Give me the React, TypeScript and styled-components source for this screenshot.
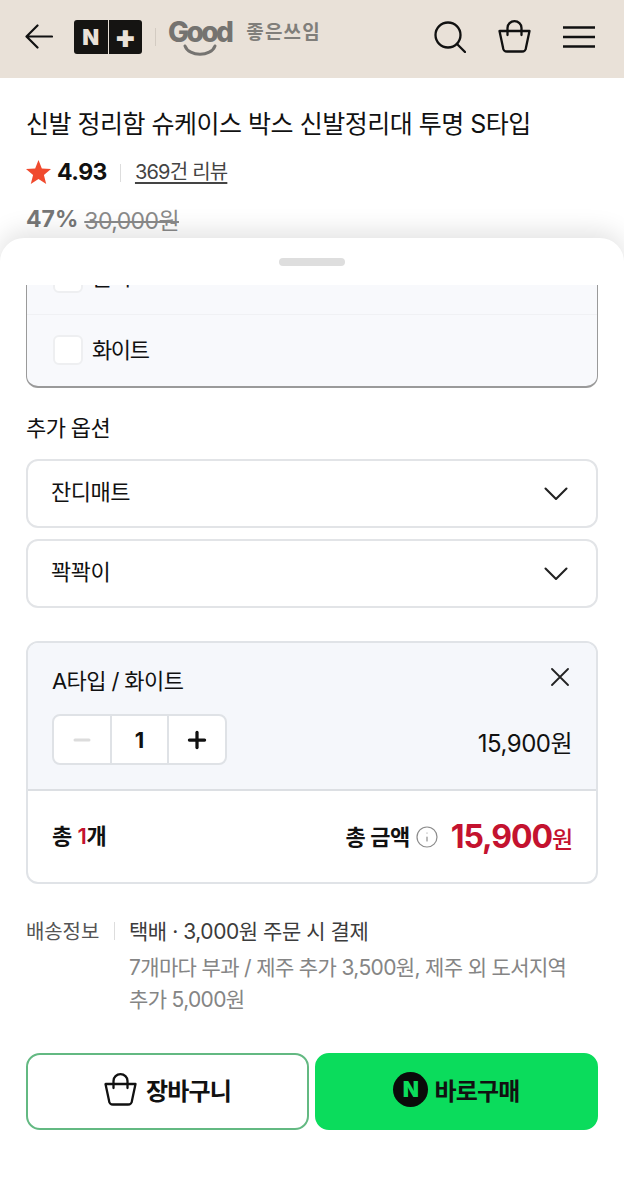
import React from 'react';
import styled, { createGlobalStyle } from 'styled-components';
import { Info, Minus, Plus } from 'lucide-react';

const GlobalStyle = createGlobalStyle`
    html, body {
        margin: 0;
        padding: 0;
        background: #fff;
    }
    body {
        font-family: Inter, "Noto Sans CJK KR", sans-serif;
        color: #111;
    }
    * { box-sizing: border-box; }
`
const Page = styled.div`
    position: relative;
    width: 624px;
    height: 1200px;
    overflow: hidden;
    background: #fff;
`
const Header = styled.header`
    display: flex;
    align-items: center;
    height: 78px;
    padding: 0 29px 5px 25px;
    background: #e9e1d8;
`
const Logo = styled.div`
    display: flex;
    align-items: stretch;
    width: 68px;
    height: 34px;
    margin-left: 21px;
    border-radius: 3px;
    background: #151412;
    overflow: hidden;
`
const LogoCell = styled.span<{ $big?: boolean }>`
    flex: 1;
    display: flex;
    align-items: center;
    justify-content: center;
    color: #e9e1d8;
    font-size: ${p => (p.$big ? '32px' : '22px')};
    font-weight: 900;
    line-height: 34px;
    & + & { border-left: 1px solid #e9e1d8; }
`
const LogoDivider = styled.span`
    width: 1px;
    height: 18px;
    margin: 0 12px 0 13px;
    background: #d3cbc2;
`
const GoodMark = styled.div`
    position: relative;
    height: 34px;
    margin-top: -9px;
    color: #757370;
    font-size: 28px;
    font-weight: 800;
    letter-spacing: -2.6px;
    line-height: 34px;
    & > svg {
        position: absolute;
        left: 14px;
        top: 27px;
    }
`
const GoodText = styled.span`
    margin: -12px 0 0 15px;
    color: #807e7a;
    font-size: 19px;
    font-weight: 700;
    letter-spacing: 1.2px;
`
const HeaderIcons = styled.div`
    display: flex;
    align-items: center;
    gap: 32px;
    margin-left: auto;
`
const Product = styled.section`
    padding: 0 26px;
`
const Title = styled.h1`
    margin: 29px 0 0;
    font-size: 25px;
    font-weight: 400;
    line-height: 34px;
    letter-spacing: -0.5px;
    white-space: nowrap;
`
const RatingRow = styled.div`
    display: flex;
    align-items: center;
    height: 30px;
    margin-top: 16px;
`
const Score = styled.strong`
    margin-left: 6px;
    font-size: 23px;
    font-weight: 700;
    letter-spacing: -0.5px;
`
const RatingDivider = styled.span`
    width: 1px;
    height: 18px;
    margin: 2px 14px 0 13px;
    background: #ddd;
`
const ReviewLink = styled.a`
    margin-top: -3px;
    color: #444;
    font-size: 20px;
    letter-spacing: -0.8px;
    text-decoration: underline;
    text-underline-offset: 3px;
`
const PriceRow = styled.div`
    display: flex;
    align-items: center;
    gap: 6px;
    margin-top: 15px;
    font-size: 23px;
    color: #777;
`
const Discount = styled.strong`
    font-weight: 700;
`
const OldPrice = styled.s`
    color: #8a8a8a;
    letter-spacing: -0.6px;
`
const Sheet = styled.section`
    position: absolute;
    top: 238px;
    left: 0;
    right: 0;
    bottom: 0;
    padding: 20px 26px 0;
    border-radius: 24px 24px 0 0;
    background: #fff;
    box-shadow: 0 -6px 26px rgba(0, 0, 0, 0.12);
`
const Handle = styled.div`
    width: 66px;
    height: 8px;
    margin: 0 auto;
    border-radius: 4px;
    background: #dedede;
`
const ListClip = styled.div`
    height: 103px;
    margin-top: 19px;
    border: 1px solid #9a9a9a;
    border-top: 0;
    border-bottom-width: 2px;
    border-radius: 0 0 12px 12px;
    background: #f8f9fc;
    overflow: hidden;
`
const OptionRow = styled.div<{ $clipped?: boolean }>`
    display: flex;
    align-items: center;
    gap: 9px;
    height: 72px;
    margin-top: ${p => (p.$clipped ? '-43px' : '0')};
    padding-left: 26px;
    font-size: 22px;
    letter-spacing: -1.4px;
    & + & { border-top: 1px solid #f0f1f4; }
`
const OptionText = styled.span`
    margin-top: -6px;
`
const CheckBox = styled.span`
    width: 30px;
    height: 30px;
    margin-top: -1px;
    border: 2px solid #eeeff1;
    border-radius: 6px;
    background: #fff;
`
const SectionLabel = styled.h2`
    margin: 24px 0 15px;
    font-size: 22px;
    font-weight: 400;
    line-height: 32px;
    letter-spacing: -0.6px;
`
const Select = styled.div`
    display: flex;
    align-items: center;
    justify-content: space-between;
    height: 69px;
    padding: 0 28px 0 23px;
    border: 2px solid #e2e4e7;
    border-radius: 12px;
    font-size: 22px;
    letter-spacing: -0.5px;
    & + & { margin-top: 11px; }
`
const SelectText = styled.span`
    margin-top: -7px;
`
const CartCard = styled.div`
    margin-top: 33px;
    border: 2px solid #e0e3e7;
    border-radius: 12px;
    overflow: hidden;
`
const CartItem = styled.div`
    height: 148px;
    padding: 22px 24px 0;
    border-bottom: 2px solid #dcdfe3;
    background: #f5f7fb;
`
const ItemTop = styled.div`
    display: flex;
    align-items: flex-start;
    justify-content: space-between;
    height: 34px;
    font-size: 22px;
    letter-spacing: -0.6px;
`
const ItemName = styled.span`
    margin-top: -2px;
`
const CloseIcon = styled.svg`
    margin: 3px 3px 0 0;
`
const ItemBottom = styled.div`
    display: flex;
    align-items: flex-end;
    justify-content: space-between;
    margin-top: 15px;
`
const Stepper = styled.div`
    display: flex;
    width: 175px;
    height: 51px;
    border: 2px solid #dfe2e6;
    border-radius: 8px;
    background: #fff;
    overflow: hidden;
`
const StepCell = styled.span`
    flex: 1;
    display: flex;
    align-items: center;
    justify-content: center;
    font-size: 22px;
    font-weight: 700;
    & + & { border-left: 2px solid #dfe2e6; }
`
const ItemPrice = styled.span`
    margin-bottom: 6px;
    font-size: 24px;
    letter-spacing: -0.5px;
`
const Totals = styled.div`
    display: flex;
    align-items: center;
    justify-content: space-between;
    height: 91px;
    padding: 0 24px;
`
const TotalCount = styled.span`
    margin-top: -6px;
    font-size: 22px;
    font-weight: 600;
    letter-spacing: -0.2px;
`
const Red = styled.span`
    color: #c4122f;
`
const TotalRight = styled.div`
    display: flex;
    align-items: center;
`
const TotalLabel = styled.span`
    margin: -4px 5px 0 0;
    font-size: 22px;
    font-weight: 600;
    letter-spacing: -0.5px;
`
const TotalPrice = styled.strong`
    margin-left: 12px;
    color: #c4122f;
    font-size: 32px;
    font-weight: 700;
    letter-spacing: -1.1px;
    & > small {
        font-size: 23px;
        font-weight: 500;
    }
`
const Delivery = styled.div`
    display: grid;
    grid-template-columns: 88px 1fr;
    margin-top: 32px;
    font-size: 21px;
    letter-spacing: -0.45px;
    line-height: 32px;
`
const DeliveryLabel = styled.span`
    color: #555;
    font-size: 20px;
    letter-spacing: -0.1px;
`
const DeliveryBody = styled.div`
    padding-left: 14px;
    border-left: 1px solid;
    border-image: linear-gradient(to bottom, transparent 7px, #ddd 7px, #ddd 25px, transparent 25px, transparent) 1;
    color: #3c3c3c;
`
const DeliveryNote = styled.p`
    margin: 4px 0 0;
    padding-right: 20px;
    color: #858585;
    font-size: 21px;
    letter-spacing: -0.65px;
    word-break: keep-all;
`
const Actions = styled.div`
    display: grid;
    grid-template-columns: 1fr 1fr;
    gap: 6px;
    margin-top: 37px;
`
const ActionButton = styled.button<{ $primary?: boolean }>`
    display: flex;
    align-items: center;
    justify-content: center;
    gap: 9px;
    height: 77px;
    padding: 0 0 4px;
    border: 2px solid ${p => (p.$primary ? '#0bdc5c' : '#63b982')};
    border-radius: 14px;
    background: ${p => (p.$primary ? '#0bdc5c' : '#fff')};
    color: #111;
    font: inherit;
    font-size: 24px;
    font-weight: 700;
    letter-spacing: -0.8px;
`
const NaverBadge = styled.span`
    display: flex;
    align-items: center;
    justify-content: center;
    width: 35px;
    height: 35px;
    margin-right: -3px;
    border-radius: 50%;
    background: #0a0a0a;
    color: #0bdc5c;
    font-size: 21px;
    font-weight: 900;
    letter-spacing: 0;
`

const BagIcon: React.FC = () => (
    <svg width="33" height="33" viewBox="0 0 33 33" fill="none" stroke="#111" strokeWidth="2.3" strokeLinecap="round" strokeLinejoin="round">
        <path d="M1.5 11h30L28 27.5a4 4 0 0 1-4 4H9a4 4 0 0 1-4-4z" />
        <path d="M9.5 15V8a7 6.8 0 0 1 14 0v7" />
    </svg>
)

const Chevron: React.FC = () => (
    <svg width="24" height="14" viewBox="0 0 24 14" fill="none" stroke="#222" strokeWidth="2.1" strokeLinecap="round" strokeLinejoin="round">
        <path d="M1.5 1.5L12 12 22.5 1.5" />
    </svg>
)

const App: React.FC = () => {
    return (
        <Page>
            <GlobalStyle />
            <Header>
                <svg width="28" height="25" viewBox="0 0 28 25" fill="none" stroke="#111" strokeWidth="2.2" strokeLinecap="round" strokeLinejoin="round">
                    <path d="M27 12.5H2M12.5 1.5L1.5 12.5l11 11" />
                </svg>
                <Logo>
                    <LogoCell>N</LogoCell>
                    <LogoCell $big>+</LogoCell>
                </Logo>
                <LogoDivider />
                <GoodMark>
                    Good
                    <svg width="36" height="15" viewBox="0 0 36 15" fill="none" stroke="#757370" strokeWidth="3" strokeLinecap="round">
                        <path d="M3 4c4 11 26 11 30 0" />
                    </svg>
                </GoodMark>
                <GoodText>좋은쓰임</GoodText>
                <HeaderIcons>
                    <svg width="32" height="32" viewBox="0 0 32 32" fill="none" stroke="#111" strokeWidth="2.3" strokeLinecap="round">
                        <circle cx="14" cy="14" r="12.5" />
                        <path d="M23 23l8 8" />
                    </svg>
                    <BagIcon />
                    <svg width="32" height="22" viewBox="0 0 32 22" fill="none" stroke="#111" strokeWidth="2.4">
                        <path d="M0 1.5h32M0 11h32M0 20.5h32" />
                    </svg>
                </HeaderIcons>
            </Header>
            <Product>
                <Title>신발 정리함 슈케이스 박스 신발정리대 투명 S타입</Title>
                <RatingRow>
                    <svg width="25" height="24" viewBox="0 0 24 23" fill="#f04a2e">
                        <path d="M12 0l3.2 8.2 8.8.5-6.8 5.6 2.2 8.6L12 18.1 4.6 22.9l2.2-8.6L0 8.7l8.8-.5z" />
                    </svg>
                    <Score>4.93</Score>
                    <RatingDivider />
                    <ReviewLink>369건 리뷰</ReviewLink>
                </RatingRow>
                <PriceRow>
                    <Discount>47%</Discount>
                    <OldPrice>30,000원</OldPrice>
                </PriceRow>
            </Product>
            <Sheet>
                <Handle />
                <ListClip>
                    <OptionRow $clipped>
                        <CheckBox />
                        <OptionText>블랙</OptionText>
                    </OptionRow>
                    <OptionRow>
                        <CheckBox />
                        <OptionText>화이트</OptionText>
                    </OptionRow>
                </ListClip>
                <SectionLabel>추가 옵션</SectionLabel>
                <Select>
                    <SelectText>잔디매트</SelectText>
                    <Chevron />
                </Select>
                <Select>
                    <SelectText>꽉꽉이</SelectText>
                    <Chevron />
                </Select>
                <CartCard>
                    <CartItem>
                        <ItemTop>
                            <ItemName>A타입 / 화이트</ItemName>
                            <CloseIcon width="18" height="18" viewBox="0 0 18 18" fill="none" stroke="#222" strokeWidth="1.8" strokeLinecap="round">
                                <path d="M1 1l16 16M17 1L1 17" />
                            </CloseIcon>
                        </ItemTop>
                        <ItemBottom>
                            <Stepper>
                                <StepCell><Minus size={24} strokeWidth={3} color="#dcdcdc" /></StepCell>
                                <StepCell>1</StepCell>
                                <StepCell><Plus size={26} strokeWidth={3} color="#111" /></StepCell>
                            </Stepper>
                            <ItemPrice>15,900원</ItemPrice>
                        </ItemBottom>
                    </CartItem>
                    <Totals>
                        <TotalCount>총 <Red>1</Red>개</TotalCount>
                        <TotalRight>
                            <TotalLabel>총 금액</TotalLabel>
                            <Info size={24} strokeWidth={1.2} color="#8c8c8c" />
                            <TotalPrice>15,900<small>원</small></TotalPrice>
                        </TotalRight>
                    </Totals>
                </CartCard>
                <Delivery>
                    <DeliveryLabel>배송정보</DeliveryLabel>
                    <DeliveryBody>
                        택배 · 3,000원 주문 시 결제
                        <DeliveryNote>7개마다 부과 / 제주 추가 3,500원, 제주 외 도서지역 추가 5,000원</DeliveryNote>
                    </DeliveryBody>
                </Delivery>
                <Actions>
                    <ActionButton>
                        <BagIcon />
                        장바구니
                    </ActionButton>
                    <ActionButton $primary>
                        <NaverBadge>N</NaverBadge>
                        바로구매
                    </ActionButton>
                </Actions>
            </Sheet>
        </Page>
    )
}

export default App;
